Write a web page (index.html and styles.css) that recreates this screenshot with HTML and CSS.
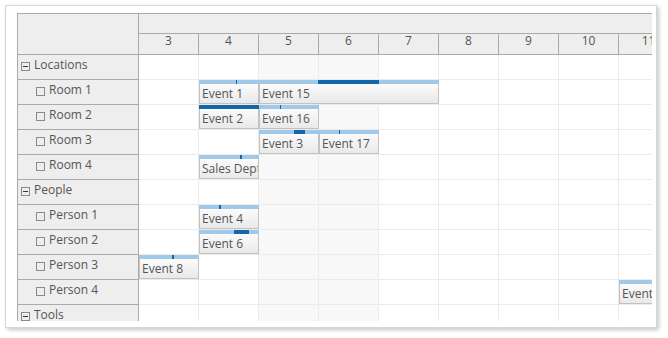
FILE: index.html
```html
<!DOCTYPE html>
<html lang="en">
<head>
    <meta charset="UTF-8">
    <title>Scheduler</title>
    <link rel="stylesheet" href="styles.css">
</head>
<body>
    <div class="frame">
        <div class="scheduler">
            <!-- resource tree -->
            <div class="side">
                <div class="corner"></div>
                <div class="rh"><span class="icon minus"></span>Locations</div>
                <div class="rh child"><span class="icon"></span>Room 1</div>
                <div class="rh child"><span class="icon"></span>Room 2</div>
                <div class="rh child"><span class="icon"></span>Room 3</div>
                <div class="rh child"><span class="icon"></span>Room 4</div>
                <div class="rh"><span class="icon minus"></span>People</div>
                <div class="rh child"><span class="icon"></span>Person 1</div>
                <div class="rh child"><span class="icon"></span>Person 2</div>
                <div class="rh child"><span class="icon"></span>Person 3</div>
                <div class="rh child"><span class="icon"></span>Person 4</div>
                <div class="rh"><span class="icon minus"></span>Tools</div>
            </div>

            <!-- timeline -->
            <div class="main">
                <div class="th1"></div>
                <div class="th2">
                    <div>3</div><div>4</div><div>5</div><div>6</div><div>7</div><div>8</div><div>9</div><div>10</div><div>11</div>
                </div>
                <div class="grid">
                    <div class="cols">
                        <div class="col"></div>
                        <div class="col"></div>
                        <div class="col off"></div>
                        <div class="col off"></div>
                        <div class="col"></div>
                        <div class="col"></div>
                        <div class="col"></div>
                        <div class="col"></div>
                        <div class="col"></div>
                    </div>

                    <div class="lane"></div>
                    <div class="lane">
                        <div class="event" style="left:60px;width:60px"><div class="bar"><span style="left:37px;width:1px"></span></div><div class="box">Event 1</div></div>
                        <div class="event" style="left:120px;width:180px"><div class="bar"><span style="left:59px;width:61px"></span></div><div class="box">Event 15</div></div>
                    </div>
                    <div class="lane">
                        <div class="event" style="left:60px;width:60px"><div class="bar"><span style="left:0;width:60px"></span></div><div class="box">Event 2</div></div>
                        <div class="event" style="left:120px;width:60px"><div class="bar"><span style="left:21px;width:1px"></span></div><div class="box">Event 16</div></div>
                    </div>
                    <div class="lane">
                        <div class="event" style="left:120px;width:60px"><div class="bar"><span style="left:35px;width:11px"></span></div><div class="box">Event 3</div></div>
                        <div class="event" style="left:180px;width:60px"><div class="bar"><span style="left:20px;width:1px"></span></div><div class="box">Event 17</div></div>
                    </div>
                    <div class="lane">
                        <div class="event" style="left:60px;width:60px"><div class="bar"><span style="left:41px;width:2px"></span></div><div class="box">Sales Dept</div></div>
                    </div>
                    <div class="lane"></div>
                    <div class="lane">
                        <div class="event" style="left:60px;width:60px"><div class="bar"><span style="left:20px;width:2px"></span></div><div class="box">Event 4</div></div>
                    </div>
                    <div class="lane">
                        <div class="event" style="left:60px;width:60px"><div class="bar"><span style="left:35px;width:15px"></span></div><div class="box">Event 6</div></div>
                    </div>
                    <div class="lane">
                        <div class="event" style="left:0;width:60px"><div class="bar"><span style="left:33px;width:2px"></span></div><div class="box">Event 8</div></div>
                    </div>
                    <div class="lane">
                        <div class="event" style="left:480px;width:60px"><div class="bar"></div><div class="box">Event 9</div></div>
                    </div>
                    <div class="lane"></div>
                </div>
            </div>
        </div>
    </div>
</body>
</html>
```

FILE: styles.css
```css
* { box-sizing: border-box; }
body { margin: 0; background: #fff; color: #555; font-family: "Open Sans", sans-serif; font-size: 12px; }

.frame {
    margin: 5px;
    width: 652px;
    height: 323px;
    padding: 7px 4px 6px 11px;
    border: 1px solid #d6d6d6;
    box-shadow: 2px 2px 4px rgba(0, 0, 0, 0.22);
    background: #fff;
}

.scheduler {
    display: flex;
    width: 635px;
    height: 308px;
    overflow: hidden;
    border-left: 1px solid #aaa;
    border-top: 1px solid #aaa;
}

/* resource tree */
.side { flex: none; width: 121px; background: #eee; border-right: 1px solid #aaa; }
.corner { height: 41px; border-bottom: 1px solid #aaa; }
.rh {
    display: flex;
    align-items: flex-start;
    gap: 4px;
    height: 25px;
    padding: 2px 0 0 3px;
    line-height: 16px;
    border-bottom: 1px solid #aaa;
    white-space: nowrap;
}
.rh.child { padding-left: 18px; }
.icon { position: relative; flex: none; width: 9px; height: 9px; margin-top: 5px; border: 1px solid #8a8a8a; }
.icon.minus::after { content: ""; position: absolute; left: 1px; top: 3px; width: 5px; height: 1px; background: #333; }

/* timeline */
.main { flex: none; width: 540px; }
.th1 { height: 20px; background: #eee; border-bottom: 1px solid #aaa; }
.th2 { display: flex; height: 21px; background: #eee; border-bottom: 1px solid #aaa; }
.th2 div { flex: none; width: 60px; border-right: 1px solid #aaa; text-align: center; line-height: 14px; }

.grid { position: relative; }
.cols { position: absolute; top: 0; left: 0; right: 0; bottom: 0; display: flex; }
.col { flex: none; width: 60px; border-right: 1px solid #ebebeb; }
.col.off { background: #f8f8f8; }
.lane { position: relative; height: 25px; border-bottom: 1px solid #ebebeb; }

.event { position: absolute; top: 0; height: 24px; }
.bar { position: relative; height: 4px; background: #a0c8e8; }
.bar span { position: absolute; top: 0; height: 4px; background: #1466aa; }
.box {
    height: 20px;
    padding: 2px 0 0 2px;
    line-height: 16px;
    border: 1px solid #c2c2c2;
    border-top: none;
    background: linear-gradient(#fbfbfb, #e9e9e9);
    white-space: nowrap;
    overflow: hidden;
}
```
